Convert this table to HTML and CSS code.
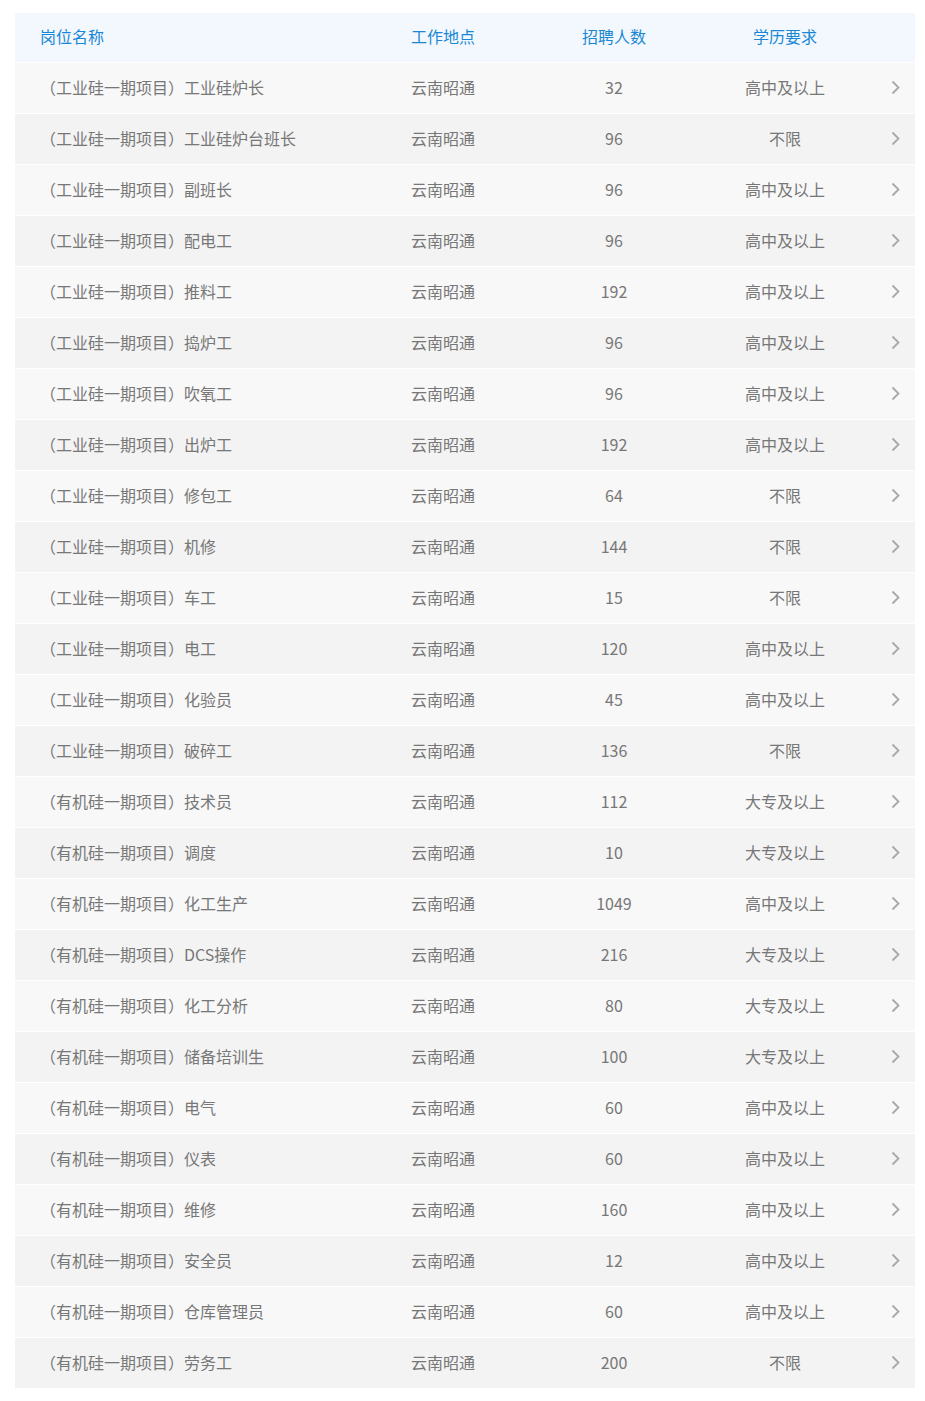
FILE: index.html
```html
<!DOCTYPE html>
<html lang="zh-CN">
<head>
<meta charset="utf-8">
<title>招聘岗位</title>
<link rel="stylesheet" href="styles.css">
</head>
<body>
<div class="page">
  <div class="jobs">
    <div class="row head">
      <div class="c name">岗位名称</div>
      <div class="c place">工作地点</div>
      <div class="c num">招聘人数</div>
      <div class="c edu">学历要求</div>
      <div class="c go"></div>
    </div>
    <div id="body"></div>
  </div>
</div>
<script src="app.js"></script>
</body>
</html>
```
FILE: styles.css
```css
* { box-sizing: border-box; }
body {
  margin: 0;
  background: #fff;
  font-family: "Noto Sans CJK SC", "Microsoft YaHei", "Liberation Sans", sans-serif;
}
.page {
  padding: 13px 10px 13px 15px;
}
.jobs {
  width: 900px;
}
.row {
  display: grid;
  grid-template-columns: 396px 130px 146px 196px 32px;
  height: 51px;
  padding-bottom: 2px;
  border-bottom: 1px solid #fff;
  align-items: center;
  font-size: 16px;
  color: #777;
}
.row.head {
  height: 50px;
  padding-bottom: 4px;
  background: #f2f8fd;
  color: #1a87d6;
}
.row.odd { background: #f8f8f8; }
.row.even { background: #f3f3f3; }
.c { white-space: nowrap; line-height: 20px; }
.name { padding-left: 25px; }
.place { text-align: left; }
.num, .edu { text-align: center; }
.go {
  display: flex;
  justify-content: flex-end;
  padding-right: 15px;
}
.go svg { display: block; }
```
FILE: app.js
```js
var data = [
  ["（工业硅一期项目）工业硅炉长","32","高中及以上"],
  ["（工业硅一期项目）工业硅炉台班长","96","不限"],
  ["（工业硅一期项目）副班长","96","高中及以上"],
  ["（工业硅一期项目）配电工","96","高中及以上"],
  ["（工业硅一期项目）推料工","192","高中及以上"],
  ["（工业硅一期项目）捣炉工","96","高中及以上"],
  ["（工业硅一期项目）吹氧工","96","高中及以上"],
  ["（工业硅一期项目）出炉工","192","高中及以上"],
  ["（工业硅一期项目）修包工","64","不限"],
  ["（工业硅一期项目）机修","144","不限"],
  ["（工业硅一期项目）车工","15","不限"],
  ["（工业硅一期项目）电工","120","高中及以上"],
  ["（工业硅一期项目）化验员","45","高中及以上"],
  ["（工业硅一期项目）破碎工","136","不限"],
  ["（有机硅一期项目）技术员","112","大专及以上"],
  ["（有机硅一期项目）调度","10","大专及以上"],
  ["（有机硅一期项目）化工生产","1049","高中及以上"],
  ["（有机硅一期项目）DCS操作","216","大专及以上"],
  ["（有机硅一期项目）化工分析","80","大专及以上"],
  ["（有机硅一期项目）储备培训生","100","大专及以上"],
  ["（有机硅一期项目）电气","60","高中及以上"],
  ["（有机硅一期项目）仪表","60","高中及以上"],
  ["（有机硅一期项目）维修","160","高中及以上"],
  ["（有机硅一期项目）安全员","12","高中及以上"],
  ["（有机硅一期项目）仓库管理员","60","高中及以上"],
  ["（有机硅一期项目）劳务工","200","不限"]
];
var body = document.getElementById("body");
var chev = '<svg width="9" height="15" viewBox="0 0 9 15"><polyline points="1.5,1.5 7.5,7.5 1.5,13.5" fill="none" stroke="#a8a8a8" stroke-width="1.8"/></svg>';
data.forEach(function (d, i) {
  var r = document.createElement("div");
  r.className = "row " + (i % 2 === 0 ? "odd" : "even");
  r.innerHTML =
    '<div class="c name">' + d[0] + '</div>' +
    '<div class="c place">云南昭通</div>' +
    '<div class="c num">' + d[1] + '</div>' +
    '<div class="c edu">' + d[2] + '</div>' +
    '<div class="c go">' + chev + '</div>';
  body.appendChild(r);
});
```
